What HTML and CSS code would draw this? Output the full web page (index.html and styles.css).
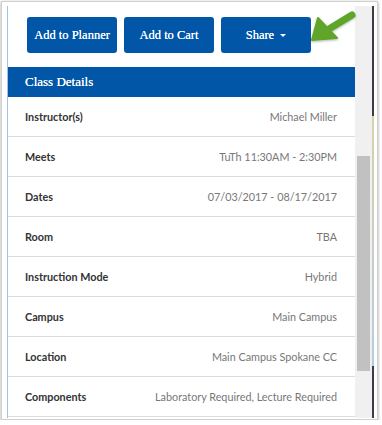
FILE: index.html
```html
<!DOCTYPE html>
<html lang="en">
  <head>
    <meta charset="UTF-8" />
    <meta name="viewport" content="width=device-width, initial-scale=1.0" />
    <title>Class Details</title>
    <link rel="stylesheet" href="styles.css">
  </head>
  <body>
    <div class="shot">
      <div class="window">
        <div class="panel">
          <div class="actions">
            <button class="btn">Add to Planner</button>
            <button class="btn">Add to Cart</button>
            <button class="btn">Share <span class="caret"></span></button>
          </div>
          <div class="head">Class Details</div>
          <div class="row"><span class="label">Instructor(s)</span><span class="value">Michael Miller</span></div>
          <div class="row"><span class="label">Meets</span><span class="value">TuTh 11:30AM - 2:30PM</span></div>
          <div class="row"><span class="label">Dates</span><span class="value">07/03/2017 - 08/17/2017</span></div>
          <div class="row"><span class="label">Room</span><span class="value">TBA</span></div>
          <div class="row"><span class="label">Instruction Mode</span><span class="value">Hybrid</span></div>
          <div class="row"><span class="label">Campus</span><span class="value">Main Campus</span></div>
          <div class="row"><span class="label">Location</span><span class="value">Main Campus Spokane CC</span></div>
          <div class="row"><span class="label">Components</span><span class="value">Laboratory Required, Lecture Required</span></div>
        </div>
        <div class="scrollbar"><div class="thumb"></div></div>
        <div class="edge"></div>
      </div>
      <!-- callout arrow pointing at the Share button -->
      <svg class="arrow" width="56" height="40" viewBox="0 0 56 40">
        <defs>
          <filter id="sh" x="-20%" y="-20%" width="140%" height="140%">
            <feDropShadow dx="0" dy="1" stdDeviation="1" flood-color="#000" flood-opacity="0.3"/>
          </filter>
        </defs>
        <g filter="url(#sh)" fill="#5fa52b" stroke="#5fa52b">
          <line x1="45" y1="6" x2="22" y2="20" stroke-width="7" stroke-linecap="round"/>
          <polygon points="5,31 11,9 30,29" stroke-width="2" stroke-linejoin="round"/>
        </g>
      </svg>
    </div>
  </body>
</html>
```

FILE: styles.css
```css
body {
  margin: 0;
  background: #fff;
}
.shot {
  position: relative;
  margin: 1px 0 0 1px;
  width: 377px;
  height: 419px;
  border: 1px solid #cfcfcf;
  box-shadow: 0 1px 3px rgba(0, 0, 0, 0.35);
  padding: 4px 0 0 5px;
  box-sizing: border-box;
  background: #fff;
}
.window {
  display: flex;
  height: 412px;
}
.panel {
  width: 348px;
  border-left: 1px solid #9fc4ec;
  box-sizing: border-box;
  overflow: hidden;
  background: #fff;
}
.actions {
  display: flex;
  gap: 7px;
  padding: 11px 0 0 19px;
  margin-bottom: 14px;
}
.btn {
  width: 90px;
  height: 36px;
  border: 0;
  border-radius: 3px;
  background: #0256a7;
  color: #fff;
  font-family: "Liberation Serif", serif;
  font-size: 12.5px;
  text-shadow: 0 0 0.4px #fff;
  padding: 0;
}
.caret {
  display: inline-block;
  margin-left: 3px;
  vertical-align: middle;
  border-left: 3px solid transparent;
  border-right: 3px solid transparent;
  border-top: 3px solid #fff;
}
.head {
  height: 30px;
  line-height: 30px;
  padding-left: 17px;
  background: #0256a7;
  color: #fff;
  font-family: "Liberation Serif", serif;
  font-size: 13px;
  text-shadow: 0 0 0.4px #fff;
}
.row {
  display: flex;
  justify-content: space-between;
  align-items: center;
  height: 39px;
  padding: 0 18px 0 17px;
  border-bottom: 1px solid #dcdcdc;
  font-family: Lato, "Liberation Sans", sans-serif;
  font-size: 10.8px;
}
.label {
  color: #333;
  font-weight: bold;
}
.value {
  color: #777;
}
.scrollbar {
  width: 17px;
  background: #f0f0f0;
  padding: 150px 2px 0 2px;
  box-sizing: border-box;
}
.thumb {
  height: 215px;
  background: #c1c1c1;
}
.edge {
  width: 2px;
  background: linear-gradient(#3a3f47 0, #3a3f47 110px, #d9d2a4 110px, #b6cbe3 360px, #3a3f47 360px);
}
.arrow {
  position: absolute;
  left: 305px;
  top: 7px;
}
```
